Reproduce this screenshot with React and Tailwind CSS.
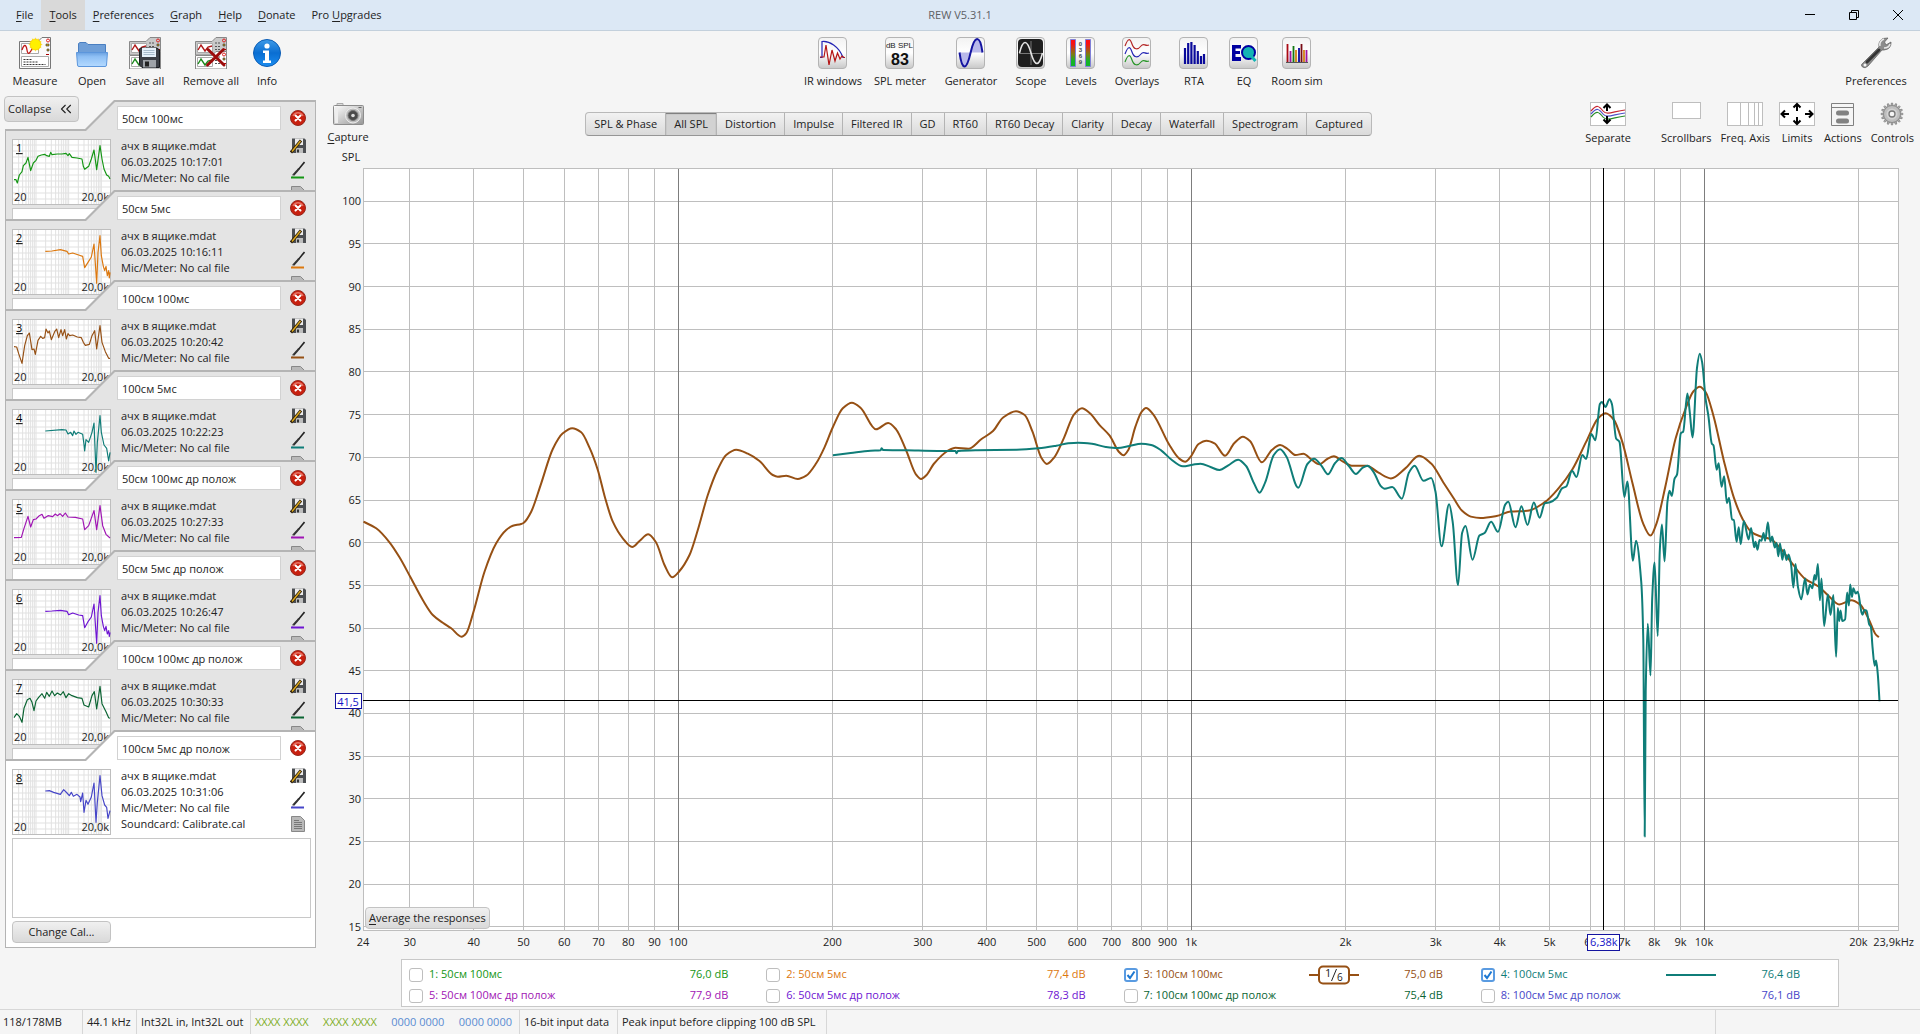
import { useState } from 'react';
import { ChevronsLeft } from 'lucide-react';

const MENU = [
  ['', 'F', 'ile'],
  ['', 'T', 'ools'],
  ['', 'P', 'references'],
  ['', 'G', 'raph'],
  ['', 'H', 'elp'],
  ['', 'D', 'onate'],
  ['Pro ', 'U', 'pgrades'],
];

const TABS = [
  'SPL & Phase', 'All SPL', 'Distortion', 'Impulse', 'Filtered IR', 'GD', 'RT60',
  'RT60 Decay', 'Clarity', 'Decay', 'Waterfall', 'Spectrogram', 'Captured',
];

const MEASUREMENTS = [
  {
    name: '50см 100мс', time: '10:17:01', color: '#149614', value: '76,0 dB',
    thumb: '6,122 12,122 16,132 22,108 30,98 34,80 42,72 48,55 56,95 64,72 72,64 78,52 88,48 98,46 104,50 112,52 116,40 120,47 136,45 150,45 162,43 168,50 172,44 180,55 195,57 210,60 214,82 218,91 230,82 238,60 246,33 254,92 264,20 270,60 276,90 284,108 290,112 294,120',
  },
  {
    name: '50см 5мс', time: '10:16:11', color: '#dc780f', value: '77,4 dB',
    thumb: '100,67 120,66 145,62 165,67 170,75 182,72 200,78 212,82 218,116 228,100 238,84 246,45 254,163 258,70 264,20 268,80 274,112 278,125 282,112 286,140 290,125 292,147 294,130',
  },
  {
    name: '100см 100мс', time: '10:20:42', color: '#965014', value: '75,0 dB',
    thumb: '6,83 14,84 20,104 30,133 38,80 46,50 52,42 60,92 66,90 70,106 78,64 86,52 92,58 98,56 102,30 108,42 112,36 118,62 128,38 134,30 140,56 147,32 152,50 158,32 163,60 168,44 173,50 182,48 196,54 208,56 214,70 220,79 232,76 240,50 248,35 254,90 264,20 270,70 280,98 290,118 294,118',
  },
  {
    name: '100см 5мс', time: '10:22:23', color: '#0f7d78', value: '76,4 dB',
    thumb: '100,66 150,62 162,63 168,75 176,70 182,80 186,66 192,76 198,70 212,76 216,106 218,126 222,92 230,100 240,70 246,42 252,190 256,100 264,20 268,70 276,108 284,118 290,156 294,130',
  },
  {
    name: '50см 100мс др полож', time: '10:27:33', color: '#a014b4', value: '77,9 dB',
    thumb: '6,116 28,115 36,88 48,52 56,84 64,62 72,60 82,50 90,46 96,58 108,50 122,53 130,45 136,50 144,44 152,52 160,42 168,54 190,55 212,60 218,92 230,80 246,35 254,92 264,20 272,80 282,106 294,117',
  },
  {
    name: '50см 5мс др полож', time: '10:26:47', color: '#6e14d2', value: '78,3 dB',
    thumb: '100,67 120,66 145,64 165,67 170,77 182,72 200,78 212,80 218,116 228,98 238,84 246,45 254,163 258,70 264,20 268,80 274,112 278,125 282,112 286,135 290,125 292,142 294,130',
  },
  {
    name: '100см 100мс др полож', time: '10:30:33', color: '#0a6432', value: '75,4 dB',
    thumb: '6,116 14,104 22,112 30,130 36,88 46,62 54,58 60,70 66,95 72,66 80,55 90,44 98,58 104,40 112,52 120,36 128,50 136,42 146,48 154,38 162,56 170,44 180,50 196,56 210,58 216,78 230,84 240,50 247,38 254,90 264,22 270,74 282,98 290,116 294,118',
  },
  {
    name: '100см 5мс др полож', time: '10:31:06', color: '#4646c8', value: '76,1 dB',
    thumb: '100,66 112,65 125,70 145,76 155,62 165,72 172,80 178,70 184,82 195,76 204,84 206,98 212,72 216,130 222,94 228,106 238,84 246,42 252,160 256,100 264,20 270,80 278,108 284,115 288,148 294,125',
  },
];

// Traces in plot units, the plot spans x 364-1898 and y 168-930
const TRACE_100MS = '364,521.7 376.7,528.3 390,542.3 400,557.3 410.7,576.7 423.3,600 433.3,615 443.3,622.7 451.7,628.3 462,636.7 466.7,633.3 474.3,610.7 485,571.7 496.7,543.3 506.7,530 513.3,525.7 521.7,524 524.3,522.7 531.7,511.7 541.7,483.3 553.3,449 563.3,433.3 572.7,428.3 581.7,432.3 590,447.7 598.3,470 605.7,498.3 613.3,521.7 623.3,538.3 632.7,547 640,541 648.7,534.3 656.7,542.7 665,565 672.7,577.3 680,571 690,555 698.3,530 708.3,495 718.3,469.3 726.7,455 736.7,449.7 748.3,453.7 760,461 773.3,475 778.3,476.7 786.7,475.7 798.3,479 806.7,475.7 816.7,463.3 825,447.3 833.3,427.3 843.3,408.3 852.4,402.7 861,407.7 876.5,429.3 888.7,423 896.6,429.3 906.5,450 916.4,474.3 921.6,479 927.1,475 934.2,464 948,451 956,447.7 969,448.7 981.7,439.3 993.5,431 1003.4,417.7 1016.5,411.3 1025.2,415 1033,431.7 1041.8,457.7 1047.3,464 1054.8,457.3 1064.7,437.3 1074.6,414.3 1082.5,408.3 1090.4,413.3 1100.3,425.3 1110.2,435.7 1119.3,451.7 1124,455.3 1128.8,450 1135.9,426.7 1141.8,412.3 1146.5,408 1153.7,414.3 1169.5,444.3 1179.4,458.3 1185.7,461.7 1191.2,456.7 1199.1,444 1207,440.7 1215,443.3 1225.6,455.7 1234.7,443.3 1243.4,436.7 1250.5,441 1262.4,462.3 1272.3,450 1280.6,445 1288.1,449 1296,455 1303.9,453.7 1311.8,459.3 1319.7,464.3 1327.7,459 1334.4,456.3 1343.5,461.7 1353.4,465.7 1367.2,465.7 1379,472.7 1391.4,478.4 1405.8,468.4 1419.6,455.7 1431.7,463.6 1443.7,482.2 1454,498 1462.6,510.8 1471.3,516.6 1480.9,518 1497,516 1510.9,511.5 1528,510.8 1545.3,502.2 1559,488.4 1572.8,469.5 1586.6,441.9 1598.7,418.2 1606.2,413.3 1614.2,419.5 1622.8,441.9 1633,483.2 1643.4,522.8 1651,535.6 1657.2,522.8 1665.8,486.7 1676.1,438.5 1686.5,407.5 1694,391.3 1700.2,386.8 1706.1,392 1714,416 1724.4,460.9 1734.7,498.7 1743.3,519.4 1751.9,532.1 1760.5,536.3 1770.8,539 1781.2,548.7 1793.2,564.2 1805.3,578.6 1819,586.5 1829.4,596.2 1839.7,604.4 1851.8,600.3 1860.4,604.4 1869,618.6 1875.9,634 1879.3,637.2';
const TRACE_5MS = '833.4,455.3 851.2,453 871,450.7 881.2,450.3 882,448.3 883.6,450 906.5,450.3 938,451 956,451 957.1,453.3 958.3,451 977.7,450.3 1017.2,449.7 1039,448.3 1056.8,445.7 1068.7,443.3 1078.5,442.7 1092.4,443.7 1106.2,447 1118,448 1130,446 1141.8,443.7 1151.7,445 1161.6,450.3 1171.5,459.3 1183.3,466.3 1193.2,464.7 1201,463.7 1211,467 1220,470 1228.8,465.3 1238.7,459.7 1246.6,466 1254.5,483.3 1260,492.7 1265.6,482.7 1274.3,455 1280.6,449.3 1287,456.7 1298.8,487.7 1307.9,464 1314.6,458.7 1321.7,465.3 1328.4,474.3 1335.6,463 1341.9,458 1349.4,466 1356.5,474 1363.2,467.7 1368,465.7 1374.3,472.3 1381,485.7 1385.2,488.7 1392.7,487 1402.4,498.7 1409.3,472.9 1415.1,465.7 1424,480.8 1431.7,478 1436,491.8 1442,546.3 1449.6,504.2 1453.3,522.8 1458.5,585.2 1462.6,533 1466,526 1473,559.7 1479.9,535.6 1485,533 1491.6,521.8 1498.5,531.8 1505.7,504.6 1508.8,501.8 1516,527.3 1521.9,506.3 1528,524.9 1534.3,502.5 1540.1,517.7 1545.3,503.2 1550.5,502.2 1557.3,497.7 1562.5,488.4 1567,486.3 1572.5,470.8 1577,477 1582.8,455 1586.6,459 1591.8,434 1595.9,440.2 1600.4,404 1602.5,402 1605.9,407 1610,399.2 1612.4,404 1616.6,438.5 1620,441.9 1624.8,497 1627.9,481.5 1633.4,560.7 1636.5,540.7 1641.7,581.4 1643.8,640 1645.2,836.5 1646.2,691.6 1648.3,623.7 1651,675.4 1652.7,598.6 1655.1,562.4 1658.2,636 1660.3,550.4 1662.4,524.6 1665.1,561.4 1667.9,502.2 1670,490.8 1672.4,496 1675,478.8 1677.5,474.6 1681.3,433.3 1683.7,431.6 1687.9,393.4 1690.3,412.6 1693,437.4 1697.5,367.9 1700.2,353.8 1702.7,362.7 1706.1,398.9 1708.9,416 1712.3,443.6 1714,445.4 1717.1,469.8 1719.2,463.3 1722,486.7 1724.7,476.3 1727.4,503.2 1729.5,497.7 1732.6,519.4 1734.3,520 1737.1,541.8 1739.2,527.3 1741.2,544.2 1744.3,521 1749.1,539.4 1751.6,528 1754.7,547.3 1756,541.8 1758,549.7 1760,540 1762,540.7 1764,533 1765.7,540.7 1768.4,522.2 1770.8,541.8 1772.6,536.6 1775.3,547.6 1777,542.8 1778.8,556.2 1780.5,543.5 1782.9,559.7 1784.6,549.7 1787,560 1789,554.5 1791.5,564 1793.9,587.6 1796,564 1798.4,586.5 1801.8,599.3 1805.6,578.6 1808,594.5 1810.4,584.8 1812.9,588.3 1815,575 1816.3,579.7 1818.4,564 1820.4,600.3 1822,578.6 1824.6,626 1828.4,594.5 1831,615 1833.9,595 1836.6,656.8 1838.3,608 1839.7,621 1841,610.6 1842.8,621 1845.6,619.3 1847.6,592.4 1849.4,605.5 1850.7,584.5 1852.5,596.9 1853.8,588.3 1856.2,593.4 1858.3,591.7 1862,612.4 1863,614.8 1864.8,610 1867,610.7 1869.7,624.4 1871.4,626.8 1873,646.8 1875.2,665.7 1876.6,660.6 1878.3,674.4 1880,701.2';

// Monotone cubic path through the points, so the peaks never overshoot
function smoothPath(text) {
  const p = text.split(' ').map((s) => s.split(',').map(Number));
  const d = p.slice(1).map((b, i) => (b[1] - p[i][1]) / (b[0] - p[i][0]));
  const m = p.map((_, i) => {
    if (i === 0) return d[0];
    if (i === p.length - 1) return d[i - 1];
    return d[i - 1] * d[i] <= 0 ? 0 : (2 * d[i - 1] * d[i]) / (d[i - 1] + d[i]);
  });
  let out = `M${p[0][0]} ${p[0][1]}`;
  for (let i = 1; i < p.length; i++) {
    const h = (p[i][0] - p[i - 1][0]) / 3;
    out += `C${p[i - 1][0] + h} ${p[i - 1][1] + m[i - 1] * h} ${p[i][0] - h} ${p[i][1] - m[i] * h} ${p[i][0]} ${p[i][1]}`;
  }
  return out;
}

const FREQS = [
  30, 40, 50, 60, 70, 80, 90, 100, 200, 300, 400, 500, 600, 700, 800, 900,
  1000, 2000, 3000, 4000, 5000, 6000, 7000, 8000, 9000, 10000, 20000,
];
const LEVELS = [100, 95, 90, 85, 80, 75, 70, 65, 60, 55, 50, 45, 40, 35, 30, 25, 20, 15];

const freqPos = (f) => `${(((Math.log10(f) - 2) * 513 + 315) / 1535) * 100}%`;
const levelPos = (db) => `${(((103.9 - db) * 8.535) / 762) * 100}%`;
const freqText = (f) => (f >= 1000 ? `${f / 1000}k` : `${f}`);

/* ---------- icons ---------- */

function Tile({ children }) {
  return (
    <svg width="32" height="32" viewBox="0 0 32 32" fill="none" aria-hidden="true">
      <defs>
        <linearGradient id="tile" x1="0" y1="0" x2="0" y2="1">
          <stop offset="0" stopColor="#f2f2f2" />
          <stop offset="0.5" stopColor="#fff" />
          <stop offset="1" stopColor="#c8c8c8" />
        </linearGradient>
      </defs>
      <rect x="1.500" y="0.5" width="28" height="31" rx="3.5" fill="url(#tile)" stroke="#b4b4b4" />
      {children}
    </svg>
  );
}

function Sheet({ y, fill, wave }) {
  return (
    <g transform={`translate(0 ${y})`}>
      <path d="M.5 18V4.500H17L21 .5H31.500V18Z" fill={fill} stroke="#888" />
      <path d="M2.500 6.500h15v9h-15z" fill="#fff" stroke="#aaa" />
      <path d="M3 13l3-5 4 6 3-4 4-1" stroke={wave} strokeWidth="1.400" fill="none" />
      <path d="M20 6h6M20 9.500h5M20 12.500h6" stroke="#555" strokeDasharray="2 1" />
      <circle cx="29" cy="3.500" r="1.500" stroke="#d22" fill="none" />
      <path d="M28 7h2v2h-2z" fill="#caa21a" stroke="#333" strokeWidth=".6" />
      <path d="M28 12.500h3" stroke="#b00" />
    </g>
  );
}

function MeasureIcon() {
  const rays = Array.from({ length: 12 }, (_, i) => i * 30);
  return (
    <svg width="32" height="32" viewBox="0 0 32 32" fill="none" aria-hidden="true">
      <path d="M.5 31.500V4.500H19L23 .5H31.500V31.500Z" fill="#fafafa" stroke="#777" />
      <path d="M2.500 6.500h17v10h-17zM2.500 19.500h27v10h-27z" fill="#fff" stroke="#aaa" />
      <path d="M3 13c2-6 4-6 5 0s3 3 5-1l5-2" stroke="#c01818" strokeWidth="1.300" />
      <path d="M4.500 22.500h9M4.500 25h14M4.500 27.500h22" stroke="#333" strokeDasharray="2 1" />
      <path d="M27 7h3v2h-3zM28 12h2v2h-2z" fill="#d6a91a" stroke="#333" strokeWidth=".6" />
      <circle cx="29" cy="3.500" r="1.500" stroke="#d22" />
      <path d="M27 17.500h3" stroke="#a00" />
      {rays.map((r) => (
        <path key={r} d="M15 7L16.500 0 18 7Z" fill="#ffe600" transform={`rotate(${r} 16.500 7.500)`} />
      ))}
      <circle cx="16.500" cy="7.500" r="5.500" fill="#fff000" stroke="#f5b800" strokeWidth=".6" />
    </svg>
  );
}

function OpenIcon() {
  return (
    <svg width="32" height="32" viewBox="0 0 32 32" fill="none" aria-hidden="true">
      <defs>
        <linearGradient id="folder" x1="0" y1="0" x2="0" y2="1">
          <stop offset="0" stopColor="#6aa0e0" />
          <stop offset="0.3" stopColor="#8fc0f5" />
          <stop offset="1" stopColor="#b4daff" />
        </linearGradient>
      </defs>
      <path d="M2.500 17V6.500L4 5.500h6l2 2h17.500V17Z" fill="#6f9fd8" stroke="#4a7fc1" />
      <path d="M.5 15.500h31L30.500 28q0 1.500-1.500 1.500H3Q1.500 29.500 1.500 28Z" fill="url(#folder)" stroke="#5c96dc" />
    </svg>
  );
}

function SaveAllIcon() {
  return (
    <svg width="32" height="32" viewBox="0 0 32 32" fill="none" aria-hidden="true">
      <Sheet y={0} fill="#c9c9c9" wave="#b01818" />
      <Sheet y={14} fill="#fff" wave="#1c8a1c" />
      <path d="M11.500 11H28l2.500 2v17.500H13L10.500 28V12Z" fill="#3c3f45" stroke="#1b1d20" />
      <path d="M13 11h14v9H13z" fill="#e6f1fa" />
      <path d="M14.500 13.500h11M14.500 15.500h11M14.500 17.500h11" stroke="#a9bccb" />
      <path d="M14 23h13v7.500H14z" fill="#9fa3a8" />
      <path d="M16 24.500h4v5h-4z" fill="#222" />
    </svg>
  );
}

function RemoveAllIcon() {
  return (
    <svg width="32" height="32" viewBox="0 0 32 32" fill="none" aria-hidden="true">
      <Sheet y={0} fill="#c9c9c9" wave="#b01818" />
      <Sheet y={14} fill="#fff" wave="#1c8a1c" />
      <path d="M13 12.500L29 28M28.500 12.500L12.500 28" stroke="#9c0c0c" strokeWidth="3" strokeLinecap="round" />
    </svg>
  );
}

function InfoIcon() {
  return (
    <svg width="32" height="32" viewBox="0 0 32 32" aria-hidden="true">
      <defs>
        <linearGradient id="info" x1="0" y1="0" x2="0" y2="1">
          <stop offset="0" stopColor="#3f9be8" />
          <stop offset="0.5" stopColor="#0a6ed2" />
          <stop offset="1" stopColor="#1b8df0" />
        </linearGradient>
      </defs>
      <circle cx="16" cy="16" r="13.500" fill="url(#info)" stroke="#0b5cb4" />
      <circle cx="16" cy="9" r="2.600" fill="#fff" />
      <path d="M12 13.500h6v10h2v2.500h-8v-2.500h2v-7.500h-2Z" fill="#fff" />
    </svg>
  );
}

const IrIcon = () => (
  <Tile>
    <path d="M3 20.500h2.500M5 21V4.500c7-1 17 5 21 16H28" stroke="#2424b4" strokeWidth="1.200" />
    <path d="M3 20h4L9 8l3 20 3-15 3 11 2.500-8 2.500 6 2-3 2 1.500h1" stroke="#b41414" strokeWidth="1.200" />
  </Tile>
);

const SplIcon = () => (
  <Tile>
    <text x="15.500" y="11" textAnchor="middle" fontSize="8" fill="#222" fontFamily="Liberation Sans, sans-serif">dB SPL</text>
    <text x="16" y="28" textAnchor="middle" fontSize="16" fontWeight="700" fill="#111" fontFamily="Liberation Sans, sans-serif">83</text>
  </Tile>
);

const GeneratorIcon = () => (
  <Tile>
    <path d="M4.500 15.500C7 34 11.500 34 15.500 16S25 -3 27.500 15.500Z" fill="#b9b9ea" />
    <path d="M4.500 15.500C7 34 11.500 34 15.500 16S25 -3 27.500 15.500" stroke="#1414a0" strokeWidth="2" />
  </Tile>
);

const ScopeIcon = () => (
  <Tile>
    <rect x="3" y="2" width="25" height="28" rx="4" fill="#1e1e1e" />
    <path d="M16 4v24M4 16.500h24" stroke="#777" />
    <path d="M4.500 16C8 2 12 2 16 16s8 14 11.500 0" stroke="#e6e6e6" strokeWidth="1.600" />
  </Tile>
);

const LevelsIcon = () => (
  <Tile>
    <defs>
      <linearGradient id="meter" x1="0" y1="0" x2="0" y2="1">
        <stop offset="0.15" stopColor="#fa0f14" />
        <stop offset="0.55" stopColor="#7d7d14" />
        <stop offset="0.8" stopColor="#14b428" />
      </linearGradient>
    </defs>
    <path d="M5.500 2.500h5v27h-5zM20.500 2.500h5v27h-5z" fill="url(#meter)" stroke="#8080d8" />
    {['0', '3', '6', '9'].map((n, i) => (
      <text key={n} x="15.500" y={9 + i * 6} textAnchor="middle" fontSize="6" fontWeight="700" fill="#444" fontFamily="Liberation Sans, sans-serif">{n}</text>
    ))}
  </Tile>
);

const OverlaysIcon = () => (
  <Tile>
    <path d="M4 9c3-8 5-8 7-2s6 6 9 2 4 1 8-1" stroke="#b42828" strokeWidth="1.200" />
    <path d="M4 17c3-8 5-8 7-2s6 6 9 2 4 1 8-1" stroke="#2828b4" strokeWidth="1.200" />
    <path d="M4 25c3-8 5-8 7-2s6 6 9 2 4 1 8-1" stroke="#289628" strokeWidth="1.200" />
  </Tile>
);

const RtaIcon = () => (
  <Tile>
    <path d="M7 27V11M10.200 27V6M13.400 27V5M16.600 27V8M19.800 27V14M23 27V19M26 27V17" stroke="#0a0a9b" strokeWidth="2.200" />
  </Tile>
);

const EqIcon = () => (
  <Tile>
    <path d="M4 8h9v3.500H7.500v2.500H12v3H7.500v3H13V24H4Z" fill="#0000a0" />
    <circle cx="20.500" cy="15.500" r="6.500" fill="#14b4b4" stroke="#0000a0" strokeWidth="2" />
    <path d="M21.500 17l6 7" stroke="#14b4b4" strokeWidth="3" />
  </Tile>
);

const RoomIcon = () => (
  <Tile>
    <path d="M5 25.500h22" stroke="#555" />
    <path d="M6.500 25V7" stroke="#aa0a14" strokeWidth="1.800" />
    <path d="M9.500 25V14M25.500 25V13" stroke="#a014a0" strokeWidth="1.800" />
    <path d="M12.500 25V9" stroke="#147814" strokeWidth="1.800" />
    <path d="M15 25V13M23 25V13" stroke="#d28214" strokeWidth="1.800" />
    <path d="M18 25V11" stroke="#0a0aa0" strokeWidth="1.800" />
    <path d="M20.500 25V7" stroke="#780a14" strokeWidth="1.800" />
  </Tile>
);

function WrenchIcon() {
  return (
    <svg width="32" height="32" viewBox="0 0 32 32" aria-hidden="true">
      <path d="M3 26L19 10Q18 4 23 1.500L28 1 24.500 5 26 8 31 5Q31.500 12 24 13L22 13 8 29Q5 32 2.500 30T3 26Z" fill="#8c8c8c" stroke="#666" strokeWidth=".8" />
      <path d="M7 25L19 13" stroke="#333" strokeWidth="3" strokeLinecap="round" />
      <path d="M20 9Q19 4 24 2M24 11Q29 11 30 7" stroke="#e8e8e8" strokeWidth="1.500" fill="none" />
      <circle cx="5" cy="28" r="1.500" fill="#f5f5f5" />
    </svg>
  );
}

function CameraIcon() {
  return (
    <svg width="31" height="22" viewBox="0 0 31 22" aria-hidden="true">
      <defs>
        <linearGradient id="camera" x1="0" y1="0" x2="1" y2="1">
          <stop offset="0" stopColor="#fff" />
          <stop offset="1" stopColor="#969696" />
        </linearGradient>
      </defs>
      <path d="M4 .5h6v3H4z" fill="#ddd" stroke="#aaa" />
      <rect x=".5" y="2.500" width="30" height="19" rx="1" fill="url(#camera)" stroke="#8c8c8c" />
      <path d="M2 4h3v16H2z" fill="#eee" />
      <circle cx="20" cy="12.500" r="7.500" fill="#bdbdbd" stroke="#eee" />
      <circle cx="20" cy="12.500" r="5" fill="#4a4a4a" stroke="#777" />
      <circle cx="20" cy="12.500" r="1.800" fill="#ddd" />
      <path d="M25.500 4.500h3" stroke="#666" />
    </svg>
  );
}

function SeparateIcon() {
  return (
    <svg width="36" height="24" viewBox="0 0 36 24" fill="none" aria-hidden="true">
      <rect x=".5" y=".5" width="35" height="23" fill="#fff" stroke="#bebebe" />
      <path d="M1 9c6-7 8-5 12 0s11 0 22-1" stroke="#c82832" strokeWidth="1.200" />
      <path d="M1 12c6-7 8-5 12 0s11 0 22-1" stroke="#5050c8" strokeWidth="1.200" />
      <path d="M1 15c6-7 8-5 12 0s11 0 22-1" stroke="#288c28" strokeWidth="1.200" />
      <path d="M17 9V3M13.500 6L17 2.500 20.500 6M17 14v6M13.500 17.500L17 21l3.500-3.500" stroke="#000" strokeWidth="2" />
    </svg>
  );
}

const ScrollbarsIcon = () => (
  <svg width="29" height="24" viewBox="0 0 29 24" aria-hidden="true">
    <rect x=".5" y=".5" width="28" height="16" fill="#fff" stroke="#bebebe" />
  </svg>
);

const FreqAxisIcon = () => (
  <svg width="36" height="24" viewBox="0 0 36 24" aria-hidden="true">
    <rect x=".5" y=".5" width="35" height="23" fill="#fff" stroke="#bebebe" />
    <path d="M13.500 1v22M21.500 1v22M27.500 1v22M31.500 1v22" stroke="#bebebe" />
  </svg>
);

const LimitsIcon = () => (
  <svg width="36" height="24" viewBox="0 0 36 24" fill="none" aria-hidden="true">
    <rect x=".5" y=".5" width="35" height="23" fill="#fff" stroke="#bebebe" />
    <path d="M18 9V3M14.500 5.500L18 2l3.500 3.500M18 15v6M14.500 18.500L18 22l3.500-3.500M10 12H3M6 8.500L2.500 12 6 15.500M26 12h7M30 8.500l3.500 3.500-3.500 3.500" stroke="#000" strokeWidth="2" />
  </svg>
);

const ActionsIcon = () => (
  <svg width="23" height="24" viewBox="0 0 23 24" aria-hidden="true">
    <path d="M.5 1.500h22v22H.5zM.5 5.500h22" fill="none" stroke="#808080" />
    <rect x="5" y="8.500" width="13" height="5" rx="2.500" fill="#828282" />
    <rect x="5" y="16.500" width="13" height="5" rx="2.500" fill="#828282" />
  </svg>
);

function GearIcon() {
  const teeth = Array.from({ length: 16 }, (_, i) => i * 22.5);
  return (
    <svg width="24" height="24" viewBox="0 0 24 24" aria-hidden="true">
      {teeth.map((t) => (
        <path key={t} d="M10.800 4L11.400 1h1.200l.6 3Z" fill="#aaa" stroke="#777" strokeWidth=".6" transform={`rotate(${t} 12 12)`} />
      ))}
      <circle cx="12" cy="12" r="8.500" fill="#bebebe" stroke="#8c8c8c" />
      <circle cx="12" cy="12" r="5.500" fill="#d2d2d2" />
      <circle cx="12" cy="12" r="3" fill="#f5f5f5" stroke="#777" strokeWidth="1.300" />
    </svg>
  );
}

const RemoveIcon = () => (
  <svg width="16" height="16" viewBox="0 0 16 16" aria-hidden="true">
    <circle cx="8" cy="8" r="7.500" fill="#c8200f" stroke="#96281e" />
    <path d="M3 6a5.500 5.500 0 0 1 10 0" stroke="#e8705f" strokeWidth="1.500" fill="none" />
    <path d="M5.500 5.500l5 5M10.500 5.500l-5 5" stroke="#fff" strokeWidth="2" strokeLinecap="round" />
  </svg>
);

const SaveIcon = () => (
  <svg width="16" height="16" viewBox="0 0 16 16" aria-hidden="true">
    <path d="M2 .5h12.500L16 2v13H3.500L2 13.500Z" fill="#4b4e52" />
    <path d="M5 .5h8v6.500H5z" fill="#ebebeb" />
    <path d="M6 10h7v5H6z" fill="#bebebe" />
    <path d="M7 11.500h2v3H7z" fill="#333" />
    <path d="M1 14.500L11 2.500" stroke="#2d1e0a" strokeWidth="3" />
    <path d="M2 13.500L10.500 3" stroke="#dcaa1e" strokeWidth="1.400" />
  </svg>
);

const PenIcon = ({ color }) => (
  <svg width="14" height="18" viewBox="0 0 14 18" aria-hidden="true">
    <path d="M13.500 1L7 9" stroke="#222" strokeWidth="1.600" />
    <path d="M8 7.500L6 10 2 14.500" stroke="#333" strokeWidth="2" fill="none" />
    <path d="M3 14L1 15.500" stroke="#999" />
    <path d="M0 16.500h13" stroke={color} strokeWidth="2" />
  </svg>
);

const DocIcon = () => (
  <svg width="14" height="16" viewBox="0 0 14 16" aria-hidden="true">
    <path d="M.5 .5h9l4 4v11H.5Z" fill="#b9b9b9" stroke="#888" />
    <path d="M3 4.500h5M3 6.500h8M3 8.500h8M3 10.500h8M3 12.500h8" stroke="#777" />
  </svg>
);

/* ---------- parts ---------- */

function ToolButton({ label, icon, className }) {
  return (
    <button className={`flex flex-col items-center gap-1 whitespace-nowrap ${className || ''}`}>
      {icon}
      <span className="leading-4">{label}</span>
    </button>
  );
}

function TitleBar() {
  return (
    <header className="grid grid-cols-[1fr_auto_1fr] h-[31px] bg-[#dce8f5] border-b border-[#c3d0dc]">
      <nav className="flex pl-2">
        {MENU.map(([pre, key, post]) => (
          <button key={post} className={`px-2 pt-px whitespace-pre ${key === 'T' ? 'bg-[#d9d9d9]' : ''}`}>
            {pre}<span className="underline underline-offset-2">{key}</span>{post}
          </button>
        ))}
      </nav>
      <h1 className="self-center pt-px text-[#5c6064]">REW V5.31.1</h1>
      <div className="flex justify-end">
        <button aria-label="Minimize" className="w-11 grid place-items-center">
          <svg width="10" height="10" viewBox="0 0 10 10" stroke="#000"><path d="M0 4.500h10" /></svg>
        </button>
        <button aria-label="Restore" className="w-11 grid place-items-center">
          <svg width="10" height="10" viewBox="0 0 10 10" stroke="#000" fill="none"><path d="M.5 2.500h7v7h-7zM2.500 2.500v-2h7v7h-2" /></svg>
        </button>
        <button aria-label="Close" className="w-11 grid place-items-center">
          <svg width="10" height="10" viewBox="0 0 10 10" stroke="#000"><path d="M0 0l10 10M10 0L0 10" /></svg>
        </button>
      </div>
    </header>
  );
}

function Toolbar() {
  return (
    <div className="flex justify-between h-[67px] pt-[6px] pl-2 pr-3 items-start">
      <div className="flex mr-1">
        <ToolButton label="Measure" icon={<MeasureIcon />} className="w-[54px]" />
        <ToolButton label="Open" icon={<OpenIcon />} className="w-[60px]" />
        <ToolButton label="Save all" icon={<SaveAllIcon />} className="w-[46px]" />
        <ToolButton label="Remove all" icon={<RemoveAllIcon />} className="w-[86px]" />
        <ToolButton label="Info" icon={<InfoIcon />} className="w-[26px]" />
      </div>
      <div className="flex">
        <ToolButton label="IR windows" icon={<IrIcon />} className="w-[70px]" />
        <ToolButton label="SPL meter" icon={<SplIcon />} className="w-[64px]" />
        <ToolButton label="Generator" icon={<GeneratorIcon />} className="w-[78px]" />
        <ToolButton label="Scope" icon={<ScopeIcon />} className="w-[42px]" />
        <ToolButton label="Levels" icon={<LevelsIcon />} className="w-[58px]" />
        <ToolButton label="Overlays" icon={<OverlaysIcon />} className="w-[54px]" />
        <ToolButton label="RTA" icon={<RtaIcon />} className="w-[60px]" />
        <ToolButton label="EQ" icon={<EqIcon />} className="w-[40px]" />
        <ToolButton label="Room sim" icon={<RoomIcon />} className="w-[66px]" />
      </div>
      <ToolButton label="Preferences" icon={<WrenchIcon />} className="w-[64px]" />
    </div>
  );
}

function Thumbnail({ index, color, points }) {
  return (
    <svg viewBox="0 0 297 198" className="w-[99px] h-[66px] mt-px" role="img" aria-label={`Response ${index}`}>
      <rect x="1.500" y="1.500" width="294" height="195" fill="#fff" stroke="#bebebe" strokeWidth="3" />
      <g stroke="#e1e1e1" strokeWidth="3">
        {[18, 36, 54, 72, 90, 108, 126, 144, 162, 180].map((y) => <path key={y} d={`M3 ${y}H294`} />)}
        {[20, 32, 42, 50, 56, 62, 67, 72, 101, 118, 131, 140, 148, 154, 160, 165, 170, 199, 216, 229, 238, 246, 253, 259, 264, 268].map((x) => (
          <path key={x} d={`M${x} 3V195`} />
        ))}
      </g>
      <text x="6" y="187" fontSize="33" fill="#222">20</text>
      <text x="291" y="187" fontSize="33" fill="#222" textAnchor="end">20,0k</text>
      <polyline points={points} fill="none" stroke={color} strokeWidth="3.500" strokeLinejoin="round" />
      <text x="12" y="38" fontSize="33" fill="#000">{index}</text>
      <path d="M12 44h20" stroke="#000" strokeWidth="3" />
    </svg>
  );
}

const TAB_SHAPE = '[clip-path:polygon(109px_0,100%_0,100%_100%,0_100%,0_29px,80px_29px)]';

function MeasurementCard({ item, index, active }) {
  return (
    <li className={`${TAB_SHAPE} bg-[#b4b4b4] p-px pt-[2px] ${active ? '' : '-mb-32'}`}>
      <div className={`${TAB_SHAPE} ${active ? 'bg-white' : 'bg-[#e4e4e4]'} h-[215px] pl-[6px] pr-1 pt-1`}>
        <div className="flex items-center justify-between pl-[105px] pr-[5px]">
          <input
            aria-label={`Measurement ${index} name`}
            defaultValue={item.name}
            className="w-[164px] h-6 px-1 bg-white border border-[#d2d2d2]"
          />
          <button aria-label={`Remove measurement ${index}`}><RemoveIcon /></button>
        </div>
        <div className="flex pt-2">
          <Thumbnail index={index} color={item.color} points={item.thumb} />
          <div className="flex-1 pl-[10px] leading-4">
            <div>ачх в ящике.mdat</div>
            <div>06.03.2025 {item.time}</div>
            <div>Mic/Meter: No cal file</div>
            <div>Soundcard: Calibrate.cal</div>
          </div>
          <div className="flex flex-col items-center gap-[7px] w-[26px]">
            <button aria-label="Save"><SaveIcon /></button>
            <button aria-label="Trace color"><PenIcon color={item.color} /></button>
            <button aria-label="Notes file"><DocIcon /></button>
          </div>
        </div>
        <textarea aria-label={`Measurement ${index} notes`} className="block w-full h-20 mt-[3px] bg-white border border-[#c8c8c8] resize-none" />
        <button className="mt-[3px] w-[99px] h-[22px] rounded border border-[#c3c3c3] bg-linear-to-b from-[#f0f0f0] to-[#d9d9d9]">
          Change Cal...
        </button>
      </div>
    </li>
  );
}

function Sidebar() {
  return (
    <aside className="w-[312px] ml-1 shrink-0 pt-[2px]">
      <button className="relative -mt-[4px] flex items-center justify-between w-[75px] h-[26px] px-[3px] rounded border border-[#c3c3c3] bg-linear-to-b from-[#f0f0f0] to-[#d9d9d9]">
        Collapse <ChevronsLeft size={18} strokeWidth={1.5} />
      </button>
      <ul className="-mt-[22px] ml-px">
        {MEASUREMENTS.map((m, i) => (
          <MeasurementCard key={m.time} item={m} index={i + 1} active={i === MEASUREMENTS.length - 1} />
        ))}
      </ul>
    </aside>
  );
}

function GraphHeader() {
  const [tab, setTab] = useState('All SPL');
  return (
    <div className="flex items-start justify-between h-[70px] pr-[6px]">
      <div className="flex flex-col items-center w-16 pt-[5px]">
        <button className="flex flex-col items-center gap-[4px]">
          <CameraIcon />
          <span className="leading-4"><span className="underline underline-offset-2">C</span>apture</span>
        </button>
        <span className="leading-4 mt-[4px] pl-[6px]">SPL</span>
      </div>
      <div role="tablist" className="flex mt-[14px] mr-2 h-[24px] rounded border border-[#b9b9b9] border-b-[#969696] bg-linear-to-b from-[#f2f2f2] to-[#dadada] overflow-hidden">
        {TABS.map((t) => (
          <button
            key={t}
            role="tab"
            aria-selected={t === tab}
            onClick={() => setTab(t)}
            className={`px-2 whitespace-nowrap border-r border-[#b4b4b4] last:border-r-0 ${t === tab ? 'bg-[#d2d2d2] shadow-[inset_0_1px_1px_#777]' : ''}`}
          >
            {t}
          </button>
        ))}
      </div>
      <div className="flex gap-[9px] pt-1">
        <ToolButton label="Separate" icon={<SeparateIcon />} className="mr-[21px]" />
        <ToolButton label="Scrollbars" icon={<ScrollbarsIcon />} />
        <ToolButton label="Freq. Axis" icon={<FreqAxisIcon />} />
        <ToolButton label="Limits" icon={<LimitsIcon />} />
        <ToolButton label="Actions" icon={<ActionsIcon />} />
        <ToolButton label="Controls" icon={<GearIcon />} />
      </div>
    </div>
  );
}

function Graph() {
  return (
    <div className="relative flex-1 flex min-h-[400px] ml-[47px] mr-[22px]">
      <svg className="flex-1 overflow-visible" role="img" aria-label="SPL against frequency">
        <rect width="100%" height="100%" fill="#fff" />
        <g shapeRendering="crispEdges">
          {LEVELS.map((db) => (
            <line key={db} x1="0" x2="100%" y1={levelPos(db)} y2={levelPos(db)} stroke="#bebebe" />
          ))}
          {FREQS.map((f) => (
            <line
              key={f}
              x1={freqPos(f)}
              x2={freqPos(f)}
              y1="0"
              y2="100%"
              stroke={[100, 1000, 10000].includes(f) ? '#7d7d7d' : '#bebebe'}
            />
          ))}
          <rect width="100%" height="100%" fill="none" stroke="#bebebe" />
        </g>
        <g fill="#222" className="text-[11px]">
          {LEVELS.map((db) => (
            <text key={db} x="0" dx="-2" y={levelPos(db)} dy="4" textAnchor="end">{db}</text>
          ))}
          {FREQS.map((f) => (
            <text key={f} x={freqPos(f)} y="100%" dy="16" textAnchor="middle">{freqText(f)}</text>
          ))}
          <text x="0" y="100%" dy="16" textAnchor="middle">24</text>
          <text x="100%" dx="16" y="100%" dy="16" textAnchor="end">23,9kHz</text>
        </g>
        <svg width="100%" height="100%" viewBox="363.500 168 1535 762" preserveAspectRatio="none" fill="none" strokeWidth="2" strokeLinejoin="round">
          <path d={smoothPath(TRACE_100MS)} stroke="#965014" vectorEffect="non-scaling-stroke" />
          <path d={smoothPath(TRACE_5MS)} stroke="#0f7d78" vectorEffect="non-scaling-stroke" />
        </svg>
        <g stroke="#000" shapeRendering="crispEdges">
          <line x1={freqPos(6380)} x2={freqPos(6380)} y1="0" y2="100%" />
          <line x1="0" x2="100%" y1={levelPos(41.5)} y2={levelPos(41.5)} />
        </g>
        <svg x={freqPos(6380)} y="100%" overflow="visible">
          <rect x="-16" y="4" width="32" height="16" fill="#fff" stroke="#1414a0" shapeRendering="crispEdges" />
          <text x="0" y="16" textAnchor="middle" fill="#1414c8" className="text-[11px]">6,38k</text>
        </svg>
        <svg x="0" y={levelPos(41.5)} overflow="visible">
          <rect x="-28" y="-7" width="26" height="15" fill="#fff" stroke="#1414a0" shapeRendering="crispEdges" />
          <text x="-15" y="5" textAnchor="middle" fill="#1414c8" className="text-[11px]">41,5</text>
        </svg>
      </svg>
      <button className="absolute left-[2px] bottom-px h-[22px] px-[3px] rounded border border-[#c3c3c3] bg-linear-to-b from-[#f0f0f0] to-[#d9d9d9]">
        <span className="underline underline-offset-2">A</span>verage the responses
      </button>
    </div>
  );
}

function LegendRow({ item, index }) {
  const [on, setOn] = useState(index === 3 || index === 4);
  return (
    <div className="flex items-center h-[21px] pr-[38px]" style={{ color: item.color }}>
      <label className="flex items-center flex-1">
        <input
          type="checkbox"
          checked={on}
          onChange={() => setOn(!on)}
          className="peer appearance-none size-[14px] rounded-[3px] border border-[#bebebe] bg-white checked:border-2 checked:border-[#5a9be1]"
        />
        <svg viewBox="0 0 14 14" className="size-[14px] -ml-[14px] invisible peer-checked:visible pointer-events-none" fill="none" stroke="#1e78d2" strokeWidth="2">
          <path d="M3.500 7l2.500 3 4.500-6.500" />
        </svg>
        <span className="pl-[6px]">{index}: {item.name}</span>
      </label>
      {index === 3 && (
        <svg width="50" height="20" viewBox="0 0 50 20" className="mr-[42px]" fill="none" stroke={item.color} strokeWidth="2">
          <path d="M0 10h10M40 10h10" />
          <rect x="10" y="1.500" width="30" height="17" rx="4" fill="#fff" />
          <path d="M22.500 16l5-12" stroke="#222" strokeWidth="1" />
          <text x="16" y="12" fontSize="11" fill="#222" stroke="none">1</text>
          <text x="28" y="16" fontSize="10" fill="#222" stroke="none">6</text>
        </svg>
      )}
      {index === 4 && (
        <svg width="50" height="4" viewBox="0 0 50 4" className="mr-[42px]"><path d="M0 2h50" stroke={item.color} strokeWidth="2" /></svg>
      )}
      <span className="w-[42px] text-right whitespace-nowrap">{item.value}</span>
    </div>
  );
}

function StatusBar() {
  return (
    <footer className="flex h-[25px] border-t border-[#d7d7d7] leading-6 whitespace-nowrap">
      <div className="w-[83px] pl-[3px] border-r border-[#d7d7d7]">118/178MB</div>
      <div className="w-[54px] pl-1 border-r border-[#d7d7d7]">44.1 kHz</div>
      <div className="w-[114px] pl-1 border-r border-[#d7d7d7]">Int32L in, Int32L out</div>
      <div className="flex justify-between w-[269px] pl-1 pr-[7px] border-r border-[#d7d7d7]">
        <span className="text-[#7fae28]">XXXX XXXX</span>
        <span className="text-[#7fae28]">XXXX XXXX</span>
        <span className="text-[#5a8cd2]">0000 0000</span>
        <span className="text-[#5a8cd2]">0000 0000</span>
      </div>
      <div className="w-[98px] pl-1 border-r border-[#d7d7d7]">16-bit input data</div>
      <div className="w-[209px] pl-1 border-r border-[#d7d7d7]">Peak input before clipping 100 dB SPL</div>
      <div className="flex-1" />
      <div className="w-[205px] border-l border-[#d7d7d7]" />
    </footer>
  );
}

export default function App() {
  return (
    <div className="min-h-screen flex flex-col bg-[#f5f5f5] text-[#222] text-[11px] font-['Open_Sans','Noto_Sans',sans-serif]">
      <TitleBar />
      <Toolbar />
      <div className="flex-1 flex">
        <Sidebar />
        <main className="flex-1 min-w-0 flex flex-col">
          <GraphHeader />
          <Graph />
          <div className="grid grid-cols-4 mt-[29px] mb-[2px] ml-[85px] mr-[81px] pt-1 pl-[7px] bg-white border border-[#c8c8c8]">
            {MEASUREMENTS.map((m, i) => (
              <LegendRow key={m.time} item={m} index={i + 1} />
            ))}
          </div>
        </main>
      </div>
      <StatusBar />
    </div>
  );
}
